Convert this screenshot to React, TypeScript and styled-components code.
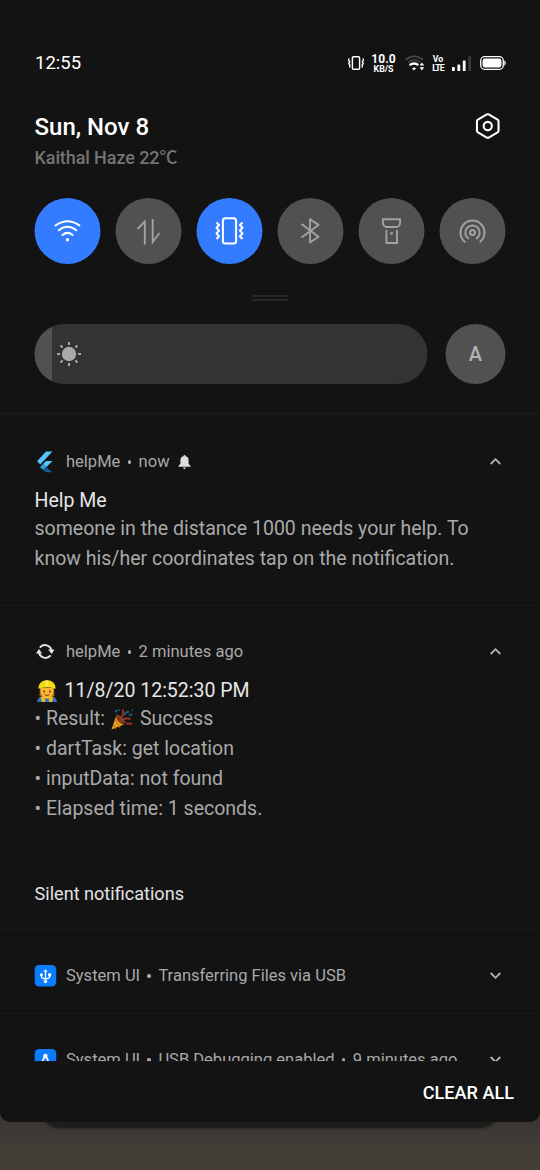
import React from 'react';
import styled, { createGlobalStyle } from 'styled-components';

const GlobalStyle = createGlobalStyle`
  *, *::before, *::after { box-sizing: border-box; }
  html, body { margin: 0; padding: 0; background: #403c37; }
  body { font-family: Roboto, "Noto Sans CJK SC", sans-serif; overflow: hidden; }
  svg { display: block; flex: none; overflow: visible; }
`;

const Screen = styled.div`
  width: 540px;
  height: 1170px;
  overflow: hidden;
  background: linear-gradient(#3a3733 0, #3a3733 1122px, #423d37 1150px);
`;

const Shade = styled.main`
  position: relative;
  z-index: 1;
  display: flex;
  flex-direction: column;
  width: 540px;
  height: 1122px;
  background: #131313;
  border-radius: 0 0 10px 10px;
`;

const CardBehind = styled.div`
  width: 462px;
  height: 26px;
  margin: -20px auto 0;
  border-radius: 0 0 22px 22px;
  background: #1f1e1d;
  box-shadow: 0 1px 3px rgba(0, 0, 0, 0.35);
`;

const QuickPanel = styled.section`
  height: 415px;
  border-bottom: 2px solid #181818;
`;

const StatusBar = styled.header`
  display: flex;
  align-items: center;
  height: 86px;
  padding: 40px 34px 0 35px;
  color: #fff;
`;

const Clock = styled.span`
  flex: 1;
  font-size: 18.5px;
  line-height: 24px;
`;

const StatusIcons = styled.div`
  display: flex;
  align-items: center;
`;

const StackedLabel = styled.div<{ $width: number; $ml?: number }>`
  display: flex;
  flex-direction: column;
  align-items: center;
  width: ${(p) => p.$width}px;
  margin-left: ${(p) => p.$ml ?? 0}px;
  padding-top: 1px;
  font-weight: 700;
`;

const SmallLine = styled.span<{ $size: number; $lh: number; $ls?: number }>`
  font-size: ${(p) => p.$size}px;
  line-height: ${(p) => p.$lh}px;
  letter-spacing: ${(p) => p.$ls ?? 0}px;
  white-space: nowrap;
`;

const DateRow = styled.div`
  display: flex;
  justify-content: space-between;
  align-items: flex-start;
  height: 112px;
  padding: 26px 40px 0 34.5px;
`;

const DateText = styled.h1`
  margin: 0;
  font-size: 24px;
  line-height: 30px;
  font-weight: 500;
  color: #fff;
`;

const Weather = styled.p`
  margin: 2px 0 0;
  font-size: 18px;
  line-height: 28px;
  letter-spacing: -0.1px;
  font-weight: 500;
  color: #747474;
`;

const Tiles = styled.div`
  display: flex;
  gap: 15px;
  padding: 0 34px 0 35px;
  transform: translateX(-0.5px);
`;

const Tile = styled.button<{ $on?: boolean }>`
  display: flex;
  flex: none;
  align-items: center;
  justify-content: center;
  width: 66px;
  height: 66px;
  padding: 0;
  border: 0;
  border-radius: 50%;
  background: ${(p) => (p.$on ? '#337bff' : '#515151')};
  color: ${(p) => (p.$on ? '#fff' : '#a2a2a2')};
`;

const Handle = styled.div`
  width: 36px;
  height: 6px;
  margin: 31px auto 23px;
  border: solid #262626;
  border-width: 2px 0;
`;

const BrightnessRow = styled.div`
  display: flex;
  gap: 18px;
  padding: 0 34px 0 35px;
  transform: translateX(-0.5px);
`;

const Slider = styled.div`
  display: flex;
  flex: none;
  align-items: center;
  width: 393px;
  height: 60px;
  padding-left: 22px;
  border-radius: 30px;
  background: linear-gradient(to right, #515151 18px, #333 18px);
  color: #a9a9a9;
`;

const AutoButton = styled.button`
  flex: none;
  width: 60px;
  height: 60px;
  padding: 0;
  border: 0;
  border-radius: 50%;
  background: #515151;
  color: #b2b2b2;
  font: 500 20px/60px Roboto, sans-serif;
`;

const List = styled.div`
  height: 646px;
  overflow: hidden;
`;

const Notification = styled.article<{ $height: number; $top: number }>`
  height: ${(p) => p.$height}px;
  padding: ${(p) => p.$top}px 34.5px 0;
  border-bottom: 2px solid #171717;
`;

const NotifHeader = styled.div`
  display: flex;
  align-items: center;
  height: 24px;
  color: #a9a9a9;
`;

const IconSlot = styled.span`
  width: 31.5px;
`;

const Meta = styled.span`
  flex: 1;
  display: flex;
  align-items: center;
  font-size: 16.52px;
  line-height: 24px;
  white-space: nowrap;
`;

const Dot = styled.span`
  width: 3.5px;
  height: 3.5px;
  margin: 0 7.4px;
  border-radius: 50%;
  background: #a9a9a9;
`;

const ChevronSlot = styled.span`
  margin: 0 5px 2px 0;
`;

const Title = styled.h2`
  display: flex;
  align-items: center;
  margin: 12px 0 0;
  font-size: 19.5px;
  line-height: 30px;
  font-weight: 400;
  color: #e6e6e6;
  white-space: nowrap;
`;

const Body = styled.div`
  margin-top: -2px;
  font-size: 19.53px;
  line-height: 30px;
  color: #a9a9a9;
  white-space: nowrap;
`;

const Line = styled.div`
  display: flex;
  align-items: center;
  height: 30px;
`;

const SectionLabel = styled.div`
  height: 73px;
  padding-left: 34.5px;
  border-bottom: 2px solid #171717;
  font-size: 18.1px;
  line-height: 73px;
  color: #e2e2e2;
`;

const Footer = styled.footer`
  display: flex;
  justify-content: flex-end;
  height: 61px;
  padding-right: 26px;
  border-top: 1px solid #181818;
`;

const ClearAll = styled.button`
  padding: 0;
  border: 0;
  background: none;
  color: #fff;
  font: 500 18.1px/62px Roboto, sans-serif;
`;

const IconBox = styled.span<{ $ml?: number; $mr?: number }>`
  margin: 0 ${(p) => p.$mr ?? 0}px 0 ${(p) => p.$ml ?? 0}px;
`;

const Chevron = ({ up }: { up?: boolean }) => (
  <ChevronSlot>
    <svg width="11" height="7" viewBox="0 0 11 7" fill="none" stroke="#b4b4b4" strokeWidth="1.8">
      <path d={up ? 'M.7 6 5.5 1.2 10.3 6' : 'M.7 1 5.5 5.8 10.3 1'} />
    </svg>
  </ChevronSlot>
);

const StatusVibrate = () => (
  <svg width="16" height="14" viewBox="0 0 16 14" fill="none" stroke="#fff" strokeWidth="1.4">
    <rect x="4.4" y=".7" width="7.2" height="12.6" rx="1" />
    <path d="M.8 2.500v2.200l.9 1.200-.9 1.600.9 1.300V11.500M15.200 2.500v2.200l-.9 1.200.9 1.600-.9 1.300V11.500" />
  </svg>
);

const StatusWifi = () => (
  <svg width="20" height="16" viewBox="0 0 20 16" fill="none" strokeWidth="2">
    <path d="M.6 4.600Q9-2 17.800 4.600" stroke="#444" />
    <path d="M2.800 7.600Q9 2.600 15.400 7.600" stroke="#383838" />
    <path d="M4.600 10.200Q9 6.800 13.400 10.200" stroke="#fff" strokeWidth="2.300" />
    <path d="m9 15.600-2-2.400q2-1.400 4 0z" fill="#fff" />
    <path d="m14.600 10.600 2.300-3.100 2.300 3.100zM14.600 12.300l2.300 3.100 2.300-3.100z" fill="#fff" />
  </svg>
);

const StatusSignal = () => (
  <svg width="19" height="15" viewBox="0 0 19 15" fill="#fff">
    <rect x="0" y="11" width="2.8" height="4" rx=".5" />
    <rect x="5.4" y="8.500" width="2.800" height="6.500" rx=".5" />
    <rect x="10.800" y="4.500" width="2.800" height="10.500" rx=".5" />
    <rect x="16.400" y="0" width="2.600" height="15" rx=".5" fill="#3c3c3c" />
  </svg>
);

const StatusBattery = () => (
  <svg width="26" height="14" viewBox="0 0 26 14">
    <rect x=".7" y=".7" width="22.6" height="12.6" rx="4" fill="none" stroke="#fff" strokeWidth="1.3" />
    <rect x="2.5" y="2.5" width="19" height="9" rx="2.4" fill="#fff" />
    <path d="M24.3 4.2q1.500 1 1.500 2.800t-1.500 2.800z" fill="#fff" />
  </svg>
);

const Gear = () => (
  <svg width="25.500" height="28" viewBox="0 0 26 28" fill="none" stroke="#fff" strokeWidth="2.100" strokeLinejoin="round">
    <path d="M12 2.200q1-.5 2 0l9 5.200q1 .6 1 1.700v9.800q0 1.100-1 1.700l-9 5.200q-1 .5-2 0l-9-5.200q-1-.6-1-1.700V9.100q0-1.100 1-1.700z" />
    <circle cx="13" cy="14" r="4.200" />
  </svg>
);

const WifiIcon = () => (
  <svg width="28" height="24" viewBox="0 0 28 24" fill="none" stroke="currentColor" strokeWidth="2" strokeLinecap="round">
    <path d="M2 6.500Q14-2.200 26 6.500M5.300 11.300Q14 4.300 22.700 11.300M9 16Q14 11.800 19 16" />
    <circle cx="14" cy="20.800" r="1.700" fill="currentColor" stroke="none" />
  </svg>
);

const DataIcon = () => (
  <svg width="24" height="27" viewBox="0 0 24 27" fill="none" stroke="currentColor" strokeWidth="1.900">
    <path d="M1 11 8.300 3.500V26.500M16.200 1V24L23 15" />
  </svg>
);

const VibrateIcon = () => (
  <svg width="30" height="28" viewBox="0 0 30 28" fill="none" stroke="currentColor" strokeWidth="2" strokeLinejoin="round">
    <rect x="8.400" y="1.200" width="13.200" height="25.200" rx="2.500" />
    <path d="M2 5.500 4.600 8 2 10.800 4.600 13.600 2 16.400 4.600 19.200 2 22M28 5.500 25.400 8 28 10.800 25.400 13.600 28 16.400 25.400 19.200 28 22" />
  </svg>
);

const BluetoothIcon = () => (
  <svg width="20" height="26" viewBox="0 0 20 26" fill="none" stroke="currentColor" strokeWidth="1.900" strokeLinejoin="round">
    <path d="m1 6 17 12.800-8.500 5.700V1.200L18 6.900 1 19.500" />
  </svg>
);

const TorchIcon = () => (
  <svg width="20" height="26" viewBox="0 0 20 26" fill="none" stroke="currentColor" strokeWidth="1.900">
    <path d="M1.400 1.200h17.200v4.300q-.4 2.400-2.800 3.500H4.200Q1.800 7.900 1.400 5.500zM4.900 12v13h10.600V12" />
    <path d="M8.700 14.200h2.800v1.600l-1.400 1.400-1.400-1.400z" fill="currentColor" stroke="none" />
  </svg>
);

const HotspotIcon = () => (
  <svg width="26" height="26" viewBox="0 0 26 26" fill="none" stroke="currentColor" strokeWidth="2">
    <path d="M5.800 24.200A12 12 0 1 1 20.200 24.200M9.300 20.800A7.200 7.200 0 1 1 16.700 20.800" />
    <circle cx="13" cy="14.600" r="2.500" />
  </svg>
);

const SunIcon = () => (
  <svg width="25" height="24" viewBox="0 0 25 24" stroke="currentColor" strokeWidth="2">
    <circle cx="12.500" cy="12" r="7.200" fill="currentColor" stroke="none" />
    <path d="M12.500 0v3M12.500 21v3M.5 12h3M21.500 12h3M4 3.500l2.100 2.100M18.900 18.400l2.100 2.100M4 20.500l2.100-2.100M18.900 5.600 21 3.500" />
  </svg>
);

const FlutterLogo = () => (
  <svg width="20" height="22" viewBox="0 0 20 22">
    <path d="M11 .5h6.500L5.300 13.500 2 10.200z" fill="#54c5f8" />
    <path d="M11 10h6.500l-6.300 6.300-3.200-3.300z" fill="#54c5f8" />
    <path d="m8 13 3.200 3.200-3 2.800L5 16z" fill="#2b9fe0" />
    <path d="m8.200 19 3-2.800 6.300 5H11z" fill="#0d5a9c" />
  </svg>
);

const SyncIcon = () => (
  <svg width="21" height="18" viewBox="0 0 21 18" fill="none" stroke="#e4e4e4" strokeWidth="2">
    <path d="M4.800 4.600A6.600 6.600 0 0 1 16.500 8M15.600 12.400A6.600 6.600 0 0 1 4 9.500" />
    <path d="M13 6.600h6.400l-2.600 4.400zM1 10.400h6.200L3.900 6z" fill="#e4e4e4" stroke="none" />
  </svg>
);

const Bell = () => (
  <IconBox $ml={8.5}>
    <svg width="13" height="14" viewBox="0 0 13 14" fill="#dedede">
      <path d="M6.500 0q1 0 1.100 1.200 3 .7 3 4v3.500L12.500 11v.8H.5V11l1.900-2.300V5.200q0-3.300 3-4Q5.500 0 6.500 0zM5 12.500h3q-.2 1.400-1.500 1.400T5 12.500z" />
    </svg>
  </IconBox>
);

const Worker = () => (
  <svg width="20" height="22" viewBox="0 0 20 22">
    <path d="M3 8h14l.5 8q-7.500 4-15 0z" fill="#a8691c" />
    <path d="M.5 22q0-5 6-5.500h7q6 .500 6 5.500z" fill="#f4b814" />
    <path d="M.5 22q0-4 3-5l1.500 5zM19.500 22q0-4-3-5L15 22z" fill="#2f6fc4" />
    <path d="M8 18.500h4V22H8z" fill="#2f6fc4" />
    <path d="M3.500 8h13v3.500q-.5 6.500-6.500 6.700-6-.2-6.500-6.700z" fill="#f9b82f" />
    <path d="M1.200 8.800Q1.800.5 10 .3q8.200.2 8.800 8.500Q10 6.300 1.200 8.800z" fill="#f7d911" />
    <path d="M8.500.4h3v5.800h-3z" fill="#ffec4a" />
    <circle cx="7" cy="11.500" r=".9" fill="#4a3020" />
    <circle cx="13" cy="11.500" r=".9" fill="#4a3020" />
    <path d="M7.500 14.700q2.500 1.600 5 0" stroke="#8a4317" fill="none" />
  </svg>
);

const Popper = () => (
  <svg width="23" height="22" viewBox="0 0 23 22" fill="none">
    <path d="M.5 21.500 5.500 7q5 3 7.500 9.500z" fill="#eda41c" />
    <path d="m4 11.500 5 8M2.200 16.500l3 4" stroke="#c77311" strokeWidth="1.300" />
    <ellipse cx="9.300" cy="11.600" rx="2.600" ry="6" transform="rotate(-38 9.300 11.600)" fill="#7c3a20" />
    <path d="M9.500 11q4-5 2-9.500M10.500 12.500q4-3.500 9-1.500" stroke="#a33e24" strokeWidth="1.700" />
    <path d="M13.500 7.500q.5-4 4.500-3.500M4 4l2-1.500M18 7.500l3-1.500" stroke="#22648c" strokeWidth="1.800" />
    <path d="M15 16.500l2-1.700 2 1.700 2-1.500M12 14l3-.5" stroke="#9c3420" strokeWidth="1.600" />
    <path d="M7 1.500 8.500 3M20.500 2l1 1" stroke="#1e5b80" strokeWidth="1.500" />
  </svg>
);

const UsbBadge = () => (
  <svg width="22" height="22" viewBox="0 0 22 22" fill="none" stroke="#fff" strokeWidth="1.300">
    <rect x="-.3" width="21.500" height="21.500" rx="4.500" fill="#0a7cff" stroke="none" />
    <path d="M10.500 6v11M6.400 10v1.500q0 2 4.100 2.300 4.100-.3 4.100-2.300V9.500" />
    <path d="m10.500 4 2 3h-4z" fill="#fff" stroke="none" />
    <circle cx="6.400" cy="9.700" r="1.500" fill="#fff" stroke="none" />
    <path d="M13.100 8.300h3v3h-3z" fill="#fff" stroke="none" />
    <circle cx="10.500" cy="16.600" r="1.700" fill="#fff" stroke="none" />
  </svg>
);

const DebugBadge = () => (
  <svg width="22" height="22" viewBox="0 0 22 22" fill="none" stroke="#fff" strokeWidth="1.700">
    <rect x="-.3" width="21.500" height="21.500" rx="4.500" fill="#0a7cff" stroke="none" />
    <circle cx="10.400" cy="7" r="2.200" fill="#fff" stroke="none" />
    <path d="M9.400 8 6.100 15.500M11.400 8l3.300 7.500" />
  </svg>
);

export default function App() {
  return (
    <Screen>
      <GlobalStyle />
      <Shade>
        <QuickPanel>
          <StatusBar>
            <Clock>12:55</Clock>
            <StatusIcons>
              <StatusVibrate />
              <StackedLabel $width={26} $ml={7}>
                <SmallLine $size={12} $lh={11} $ls={0.1}>10.0</SmallLine>
                <SmallLine $size={8.8} $lh={9}>KB/S</SmallLine>
              </StackedLabel>
              <IconBox $ml={8.5}><StatusWifi /></IconBox>
              <StackedLabel $width={26}>
                <SmallLine $size={8.8} $lh={8.5}>Vo</SmallLine>
                <SmallLine $size={8.8} $lh={8.5} $ls={-0.9}>LTE</SmallLine>
              </StackedLabel>
              <IconBox $ml={1} $mr={9}><StatusSignal /></IconBox>
              <StatusBattery />
            </StatusIcons>
          </StatusBar>
          <DateRow>
            <div>
              <DateText>Sun, Nov 8</DateText>
              <Weather>Kaithal Haze 22℃</Weather>
            </div>
            <Gear />
          </DateRow>
          <Tiles>
            <Tile $on><WifiIcon /></Tile>
            <Tile><DataIcon /></Tile>
            <Tile $on><VibrateIcon /></Tile>
            <Tile><BluetoothIcon /></Tile>
            <Tile><TorchIcon /></Tile>
            <Tile><HotspotIcon /></Tile>
          </Tiles>
          <Handle />
          <BrightnessRow>
            <Slider><SunIcon /></Slider>
            <AutoButton>A</AutoButton>
          </BrightnessRow>
        </QuickPanel>
        <List>
          <Notification $height={191} $top={35}>
            <NotifHeader>
              <IconSlot><FlutterLogo /></IconSlot>
              <Meta>helpMe<Dot />now<Bell /></Meta>
              <Chevron up />
            </NotifHeader>
            <Title>Help Me</Title>
            <Body>
              <Line>someone in the distance 1000 needs your help. To</Line>
              <Line>know his/her coordinates tap on the notification.</Line>
            </Body>
          </Notification>
          <Notification $height={251} $top={34}>
            <NotifHeader>
              <IconSlot><SyncIcon /></IconSlot>
              <Meta>helpMe<Dot />2 minutes ago</Meta>
              <Chevron up />
            </NotifHeader>
            <Title>
              <IconBox $ml={2} $mr={8}><Worker /></IconBox>
              11/8/20 12:52:30 PM
            </Title>
            <Body>
              <Line>• Result: <IconBox $ml={6} $mr={6}><Popper /></IconBox> Success</Line>
              <Line>• dartTask: get location</Line>
              <Line>• inputData: not found</Line>
              <Line>• Elapsed time: 1 seconds.</Line>
            </Body>
          </Notification>
          <SectionLabel>Silent notifications</SectionLabel>
          <Notification $height={84} $top={34}>
            <NotifHeader>
              <IconSlot><UsbBadge /></IconSlot>
              <Meta>System UI<Dot />Transferring Files via USB</Meta>
              <Chevron />
            </NotifHeader>
          </Notification>
          <Notification $height={84} $top={34}>
            <NotifHeader>
              <IconSlot><DebugBadge /></IconSlot>
              <Meta>System UI<Dot />USB Debugging enabled<Dot />9 minutes ago</Meta>
              <Chevron />
            </NotifHeader>
          </Notification>
        </List>
        <Footer>
          <ClearAll>CLEAR ALL</ClearAll>
        </Footer>
      </Shade>
      <CardBehind />
    </Screen>
  );
}
